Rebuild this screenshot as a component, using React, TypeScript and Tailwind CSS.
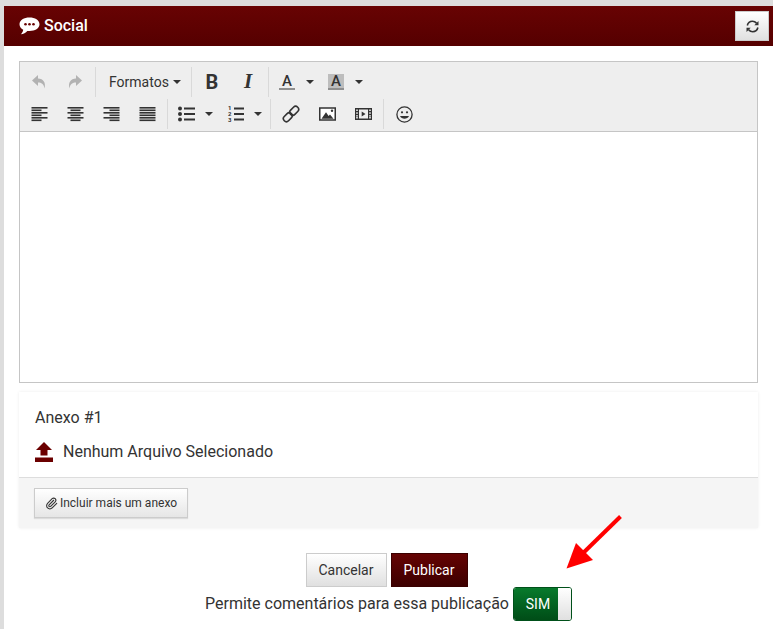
import { Paperclip } from "lucide-react";
import type { ReactNode } from "react";

const ink = "#333333";

function Tool({ children, w = "w-9" }: { children: ReactNode; w?: string }) {
  return <div className={`${w} h-[30px] flex items-center justify-center shrink-0`}>{children}</div>;
}

function Sep() {
  return <div className="w-px h-[30px] mx-[2px] bg-[#d9d9d9] shrink-0" />;
}

function Caret() {
  return <div className="w-0 h-0 border-x-4 border-x-transparent border-t-4 border-t-[#333]" />;
}

function Undo({ flip }: { flip?: boolean }) {
  return (
    <svg width="16" height="16" viewBox="0 0 16 16" className={flip ? "-scale-x-100" : ""}>
      <path d="M7 1 L1 6.5 L7 12 V8.6 C10.5 8.6 12.6 10 13.6 14.5 C15 8.5 12.5 4.6 7 4.4 Z" fill="#b2b2b2" />
    </svg>
  );
}

function Align({ kind }: { kind: "left" | "center" | "right" | "full" }) {
  const rows = [0, 1, 2, 3, 4, 5].map((i) => {
    const wide = i % 2 === 0;
    let x = 0;
    let w = 16;
    if (kind === "left" && !wide) w = 10;
    if (kind === "center" && !wide) {
      x = 3;
      w = 10;
    }
    if (kind === "right" && !wide) {
      x = 6;
      w = 10;
    }
    return <rect key={i} x={x} y={i * 2.5 + 1} width={w} height="1.6" fill={ink} />;
  });
  return (
    <svg width="17" height="16" viewBox="0 0 16 16">
      {rows}
    </svg>
  );
}

function Bullets() {
  return (
    <svg width="17" height="16" viewBox="0 0 17 16">
      <circle cx="2" cy="2.5" r="2" fill={ink} />
      <circle cx="2" cy="8" r="2" fill={ink} />
      <circle cx="2" cy="13.5" r="2" fill={ink} />
      <rect x="6" y="1.5" width="11" height="2" fill={ink} />
      <rect x="6" y="7" width="11" height="2" fill={ink} />
      <rect x="6" y="12.5" width="11" height="2" fill={ink} />
    </svg>
  );
}

function Numbers() {
  return (
    <div className="relative w-[16px] h-4">
      <div className="absolute left-0 top-[-1px] flex flex-col text-[6px] leading-[6px] font-bold text-[#333]">
        <span>1</span>
        <span>2</span>
        <span>3</span>
      </div>
      <svg width="16" height="16" viewBox="0 0 16 16" className="absolute inset-0">
        <rect x="6" y="1.5" width="10" height="2" fill={ink} />
        <rect x="6" y="7" width="10" height="2" fill={ink} />
        <rect x="6" y="12.5" width="10" height="2" fill={ink} />
      </svg>
    </div>
  );
}

function LinkIcon() {
  return (
    <svg width="18" height="18" viewBox="0 0 18 18" fill="none" stroke={ink} strokeWidth="1.6">
      <g transform="rotate(-45 9 9)">
        <rect x="-0.5" y="6" width="10" height="6" rx="3" />
        <rect x="8.5" y="6" width="10" height="6" rx="3" />
      </g>
    </svg>
  );
}

function ImageIcon() {
  return (
    <svg width="17" height="14" viewBox="0 0 17 14">
      <rect x="0.75" y="1" width="15.5" height="12" fill="#fff" stroke={ink} strokeWidth="1.5" />
      <path d="M2.5 11.8 L7 5.2 L9.6 9 L11 7.6 L14.5 11.8 Z" fill={ink} />
      <circle cx="13" cy="3.8" r="1.2" fill={ink} />
    </svg>
  );
}

function MediaIcon() {
  return (
    <svg width="17" height="14" viewBox="0 0 17 14">
      <rect x="0" y="1" width="17" height="12" fill={ink} />
      <rect x="4" y="2.5" width="9" height="9" fill="#eee" />
      {[2.5, 5.3, 8.1, 10].map((y) => (
        <g key={y}>
          <rect x="1.2" y={y} width="1.6" height="1.5" fill="#eee" />
          <rect x="14.2" y={y} width="1.6" height="1.5" fill="#eee" />
        </g>
      ))}
      <path d="M6.7 4.5 L10.5 7 L6.7 9.5 Z" fill={ink} />
    </svg>
  );
}

function Smile() {
  return (
    <svg width="17" height="17" viewBox="0 0 17 17" fill="none" stroke={ink} strokeWidth="1.3">
      <circle cx="8.5" cy="8.5" r="7.6" />
      <circle cx="6" cy="6.3" r="1.1" fill={ink} stroke="none" />
      <circle cx="11" cy="6.3" r="1.1" fill={ink} stroke="none" />
      <path d="M4 10 C5.5 13.6 11.5 13.6 13 10 Z" fill={ink} stroke="none" />
    </svg>
  );
}

function TextColor({ filled }: { filled?: boolean }) {
  return (
    <div className={`w-4 h-4 flex flex-col items-center ${filled ? "bg-[#bdbdbd]" : ""}`}>
      <span className="text-[15px] leading-[14px] font-medium text-[#333]">A</span>
      <span className="w-4 h-[2px] mt-auto bg-[#8f8f8f]" />
    </div>
  );
}

function Refresh() {
  return (
    <svg width="13" height="13" viewBox="0 0 13 13" fill="none">
      <path d="M1.3 5.5 C1.9 2.9 4 1.3 6.5 1.3 C8.1 1.3 9.5 2 10.5 3.1" stroke={ink} strokeWidth="1.6" />
      <path d="M11.9 7.5 C11.3 10.1 9.2 11.7 6.7 11.7 C5.1 11.7 3.7 11 2.7 9.9" stroke={ink} strokeWidth="1.6" />
      <path d="M12.5 1 V5.2 H8.3 Z" fill={ink} />
      <path d="M0.5 12 V7.8 H4.7 Z" fill={ink} />
    </svg>
  );
}

export default function App() {
  return (
    <div className="relative w-[773px] h-[629px] overflow-hidden bg-[#dddddd] pt-[6px] pl-[4px] font-['Roboto',sans-serif] text-[#333]">
      <div className="h-[623px] bg-white flex flex-col">
        <div className="h-10 shrink-0 flex items-center justify-between pl-[15px] pr-[4px] bg-gradient-to-b from-[#680303] to-[#550000]">
          <div className="flex items-center gap-[4px] text-white text-[16px] font-medium">
            <svg width="21" height="18" viewBox="0 0 21 18">
              <path d="M10.5 0.5 C16 0.5 20.5 3 20.5 7.3 C20.5 11.5 16 14 10.5 14 C9.6 14 9 14 8.3 13.9 C6.8 15.5 4.5 17 1.8 17.3 C3.3 15.8 4 14.5 4.2 12.8 C2 11.6 0.5 9.7 0.5 7.3 C0.5 3 5 0.5 10.5 0.5 Z" fill="#fff" />
              <circle cx="6.5" cy="7.2" r="1.3" fill="#680303" />
              <circle cx="10.5" cy="7.2" r="1.3" fill="#680303" />
              <circle cx="14.5" cy="7.2" r="1.3" fill="#680303" />
            </svg>
            <span>Social</span>
          </div>
          <button className="w-[34px] h-[30px] flex items-center justify-center border border-[#ccc] bg-gradient-to-b from-white to-[#e0e0e0]">
            <Refresh />
          </button>
        </div>

        <div className="px-[15px] pt-[15px] flex flex-col">
          <div className="h-[322px] border border-[#c5c5c5] flex flex-col">
            <div className="h-[70px] bg-[#eeeeee] border-b border-[#c5c5c5] pt-[5px] flex flex-col gap-[2px] pl-[1px] shrink-0">
              <div className="flex items-center h-[30px]">
                <Tool><Undo /></Tool>
                <Tool><Undo flip /></Tool>
                <Sep />
                <Tool w="w-[91px] !justify-start pl-[11px]">
                  <div className="flex items-center gap-[4px] text-[14px] text-[#333]">
                    <span>Formatos</span>
                    <Caret />
                  </div>
                </Tool>
                <Sep />
                <Tool><span className="text-[20px] font-bold text-[#333]">B</span></Tool>
                <Tool><span className="text-[21px] font-bold italic font-['Liberation_Serif',serif] text-[#333]">I</span></Tool>
                <Sep />
                <Tool w="w-[47px] !justify-start pl-[8px]">
                  <div className="flex items-center gap-[11px]">
                    <TextColor />
                    <Caret />
                  </div>
                </Tool>
                <Tool w="w-[47px] !justify-start pl-[10px]">
                  <div className="flex items-center gap-[11px]">
                    <TextColor filled />
                    <Caret />
                  </div>
                </Tool>
              </div>
              <div className="flex items-center h-[30px]">
                <Tool><Align kind="left" /></Tool>
                <Tool><Align kind="center" /></Tool>
                <Tool><Align kind="right" /></Tool>
                <Tool><Align kind="full" /></Tool>
                <Sep />
                <Tool w="w-[49px] !justify-start pl-[8px]">
                  <div className="flex items-center gap-[10px]">
                    <Bullets />
                    <Caret />
                  </div>
                </Tool>
                <Tool w="w-[49px] !justify-start pl-[9px]">
                  <div className="flex items-center gap-[10px]">
                    <Numbers />
                    <Caret />
                  </div>
                </Tool>
                <Sep />
                <Tool><LinkIcon /></Tool>
                <Tool><ImageIcon /></Tool>
                <Tool><MediaIcon /></Tool>
                <Sep />
                <Tool><Smile /></Tool>
              </div>
            </div>
            <div className="flex-1 bg-white" />
          </div>

          <div className="mt-[9px] h-[136px] flex flex-col shadow-[0_0_3px_rgba(0,0,0,0.08)]">
            <div className="flex-1 px-4 pt-[16px]">
              <div className="text-[16px] leading-[20px]">Anexo #1</div>
              <div className="mt-[14px] flex items-center gap-[10px] text-[16px] leading-[20px]">
                <svg width="18" height="20" viewBox="0 0 18 20">
                  <path d="M9 0 L17 8 H12.5 V13.5 H5.5 V8 H1 Z" fill="#6b0000" />
                  <rect x="0" y="15.5" width="18" height="4.5" fill="#6b0000" />
                </svg>
                <span>Nenhum Arquivo Selecionado</span>
              </div>
            </div>
            <div className="h-[51px] bg-[#f5f5f5] border-t border-[#ddd] px-[15px] flex items-center shrink-0">
              <button className="w-[154px] h-[30px] flex items-center justify-center gap-[2px] border border-[#ccc] bg-gradient-to-b from-white to-[#e6e6e6] text-[12px] shadow-[0_1px_1px_rgba(0,0,0,0.1)]">
                <Paperclip size={13} color={ink} />
                <span>Incluir mais um anexo</span>
              </button>
            </div>
          </div>

          <div className="mt-[25px] flex flex-col items-center">
            <div className="flex gap-[4px] pr-[4px]">
              <button className="w-[81px] h-[34px] border border-[#ccc] bg-gradient-to-b from-white to-[#e0e0e0] text-[14px]">Cancelar</button>
              <button className="w-[77px] h-[34px] border border-[#3a0000] bg-gradient-to-b from-[#650303] to-[#3d0000] text-[14px] text-white">Publicar</button>
            </div>
            <div className="flex items-center gap-[4px] text-[16px] text-[#333]">
              <span>Permite comentários para essa publicação</span>
              <div className="w-[59px] h-[34px] flex rounded-[3px] overflow-hidden border border-[#00501a]">
                <div className="flex-1 flex items-center justify-center pl-[4px] text-[14px] text-white bg-gradient-to-b from-[#087a2c] to-[#004d17]">SIM</div>
                <div className="w-[13px] bg-gradient-to-b from-white to-[#e0e0e0]" />
              </div>
            </div>
          </div>
        </div>
      </div>

      <svg width="70" height="70" viewBox="0 0 70 70" className="absolute left-[560px] top-[510px]">
        <path d="M60.5 6.5 L17 49" stroke="#ff0000" strokeWidth="4" />
        <path d="M6.5 58.5 L16 33 L33 50 Z" fill="#ff0000" />
      </svg>
    </div>
  );
}
